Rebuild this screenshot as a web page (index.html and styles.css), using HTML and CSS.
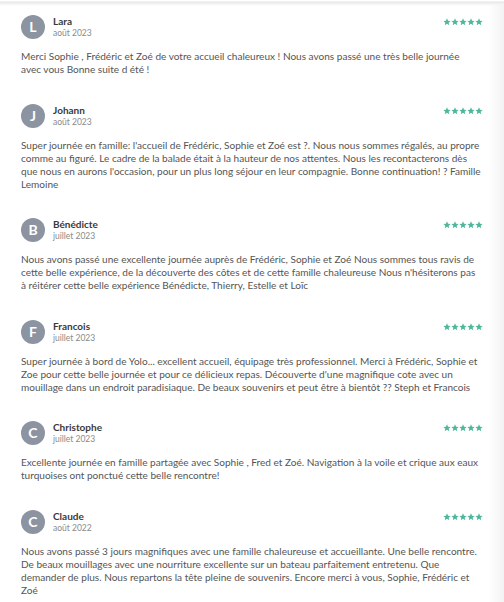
FILE: index.html
```html
<!DOCTYPE html>
<html lang="fr">
<head>
    <meta charset="UTF-8">
    <meta name="viewport" content="width=device-width, initial-scale=1.0">
    <title>Avis</title>
    <link rel="stylesheet" href="styles.css">
</head>
<body>

    <div class="top-shadow"></div>

    <div class="reviews">

        <div class="review">
            <div class="review-head">
                <div class="avatar">L</div>
                <div class="meta">
                    <div class="name">Lara</div>
                    <div class="date">août 2023</div>
                </div>
                <div class="stars">
                    <svg viewBox="0 0 10 10"><path d="M5 .4l1.3 3 3.2.3-2.4 2.1.7 3.2L5 7.3 2.2 9l.7-3.2L.5 3.7l3.2-.3z"/></svg>
                    <svg viewBox="0 0 10 10"><path d="M5 .4l1.3 3 3.2.3-2.4 2.1.7 3.2L5 7.3 2.2 9l.7-3.2L.5 3.7l3.2-.3z"/></svg>
                    <svg viewBox="0 0 10 10"><path d="M5 .4l1.3 3 3.2.3-2.4 2.1.7 3.2L5 7.3 2.2 9l.7-3.2L.5 3.7l3.2-.3z"/></svg>
                    <svg viewBox="0 0 10 10"><path d="M5 .4l1.3 3 3.2.3-2.4 2.1.7 3.2L5 7.3 2.2 9l.7-3.2L.5 3.7l3.2-.3z"/></svg>
                    <svg viewBox="0 0 10 10"><path d="M5 .4l1.3 3 3.2.3-2.4 2.1.7 3.2L5 7.3 2.2 9l.7-3.2L.5 3.7l3.2-.3z"/></svg>
                </div>
            </div>
            <p class="text">Merci Sophie , Frédéric et Zoé de votre accueil chaleureux ! Nous avons passé une très belle journée<br>avec vous Bonne suite d été !</p>
        </div>

        <div class="review">
            <div class="review-head">
                <div class="avatar">J</div>
                <div class="meta">
                    <div class="name">Johann</div>
                    <div class="date">août 2023</div>
                </div>
                <div class="stars">
                    <svg viewBox="0 0 10 10"><path d="M5 .4l1.3 3 3.2.3-2.4 2.1.7 3.2L5 7.3 2.2 9l.7-3.2L.5 3.7l3.2-.3z"/></svg>
                    <svg viewBox="0 0 10 10"><path d="M5 .4l1.3 3 3.2.3-2.4 2.1.7 3.2L5 7.3 2.2 9l.7-3.2L.5 3.7l3.2-.3z"/></svg>
                    <svg viewBox="0 0 10 10"><path d="M5 .4l1.3 3 3.2.3-2.4 2.1.7 3.2L5 7.3 2.2 9l.7-3.2L.5 3.7l3.2-.3z"/></svg>
                    <svg viewBox="0 0 10 10"><path d="M5 .4l1.3 3 3.2.3-2.4 2.1.7 3.2L5 7.3 2.2 9l.7-3.2L.5 3.7l3.2-.3z"/></svg>
                    <svg viewBox="0 0 10 10"><path d="M5 .4l1.3 3 3.2.3-2.4 2.1.7 3.2L5 7.3 2.2 9l.7-3.2L.5 3.7l3.2-.3z"/></svg>
                </div>
            </div>
            <p class="text">Super journée en famille: l'accueil de Frédéric, Sophie et Zoé est ?. Nous nous sommes régalés, au propre comme au figuré. Le cadre de la balade était à la hauteur de nos attentes. Nous les recontacterons dès que nous en aurons l'occasion, pour un plus long séjour en leur compagnie. Bonne continuation! ? Famille Lemoine</p>
        </div>

        <div class="review">
            <div class="review-head">
                <div class="avatar">B</div>
                <div class="meta">
                    <div class="name">Bénédicte</div>
                    <div class="date">juillet 2023</div>
                </div>
                <div class="stars">
                    <svg viewBox="0 0 10 10"><path d="M5 .4l1.3 3 3.2.3-2.4 2.1.7 3.2L5 7.3 2.2 9l.7-3.2L.5 3.7l3.2-.3z"/></svg>
                    <svg viewBox="0 0 10 10"><path d="M5 .4l1.3 3 3.2.3-2.4 2.1.7 3.2L5 7.3 2.2 9l.7-3.2L.5 3.7l3.2-.3z"/></svg>
                    <svg viewBox="0 0 10 10"><path d="M5 .4l1.3 3 3.2.3-2.4 2.1.7 3.2L5 7.3 2.2 9l.7-3.2L.5 3.7l3.2-.3z"/></svg>
                    <svg viewBox="0 0 10 10"><path d="M5 .4l1.3 3 3.2.3-2.4 2.1.7 3.2L5 7.3 2.2 9l.7-3.2L.5 3.7l3.2-.3z"/></svg>
                    <svg viewBox="0 0 10 10"><path d="M5 .4l1.3 3 3.2.3-2.4 2.1.7 3.2L5 7.3 2.2 9l.7-3.2L.5 3.7l3.2-.3z"/></svg>
                </div>
            </div>
            <p class="text">Nous avons passé une excellente journée auprès de Frédéric, Sophie et Zoé Nous sommes tous ravis de cette belle expérience, de la découverte des côtes et de cette famille chaleureuse Nous n'hésiterons pas à réitérer cette belle expérience Bénédicte, Thierry, Estelle et Loïc</p>
        </div>

        <div class="review">
            <div class="review-head">
                <div class="avatar">F</div>
                <div class="meta">
                    <div class="name">Francois</div>
                    <div class="date">juillet 2023</div>
                </div>
                <div class="stars">
                    <svg viewBox="0 0 10 10"><path d="M5 .4l1.3 3 3.2.3-2.4 2.1.7 3.2L5 7.3 2.2 9l.7-3.2L.5 3.7l3.2-.3z"/></svg>
                    <svg viewBox="0 0 10 10"><path d="M5 .4l1.3 3 3.2.3-2.4 2.1.7 3.2L5 7.3 2.2 9l.7-3.2L.5 3.7l3.2-.3z"/></svg>
                    <svg viewBox="0 0 10 10"><path d="M5 .4l1.3 3 3.2.3-2.4 2.1.7 3.2L5 7.3 2.2 9l.7-3.2L.5 3.7l3.2-.3z"/></svg>
                    <svg viewBox="0 0 10 10"><path d="M5 .4l1.3 3 3.2.3-2.4 2.1.7 3.2L5 7.3 2.2 9l.7-3.2L.5 3.7l3.2-.3z"/></svg>
                    <svg viewBox="0 0 10 10"><path d="M5 .4l1.3 3 3.2.3-2.4 2.1.7 3.2L5 7.3 2.2 9l.7-3.2L.5 3.7l3.2-.3z"/></svg>
                </div>
            </div>
            <p class="text">Super journée à bord de Yolo... excellent accueil, équipage très professionnel. Merci à Frédéric, Sophie et Zoe pour cette belle journée et pour ce délicieux repas. Découverte d'une magnifique cote avec un mouillage dans un endroit paradisiaque. De beaux souvenirs et peut être à bientôt ?? Steph et Francois</p>
        </div>

        <div class="review">
            <div class="review-head">
                <div class="avatar">C</div>
                <div class="meta">
                    <div class="name">Christophe</div>
                    <div class="date">juillet 2023</div>
                </div>
                <div class="stars">
                    <svg viewBox="0 0 10 10"><path d="M5 .4l1.3 3 3.2.3-2.4 2.1.7 3.2L5 7.3 2.2 9l.7-3.2L.5 3.7l3.2-.3z"/></svg>
                    <svg viewBox="0 0 10 10"><path d="M5 .4l1.3 3 3.2.3-2.4 2.1.7 3.2L5 7.3 2.2 9l.7-3.2L.5 3.7l3.2-.3z"/></svg>
                    <svg viewBox="0 0 10 10"><path d="M5 .4l1.3 3 3.2.3-2.4 2.1.7 3.2L5 7.3 2.2 9l.7-3.2L.5 3.7l3.2-.3z"/></svg>
                    <svg viewBox="0 0 10 10"><path d="M5 .4l1.3 3 3.2.3-2.4 2.1.7 3.2L5 7.3 2.2 9l.7-3.2L.5 3.7l3.2-.3z"/></svg>
                    <svg viewBox="0 0 10 10"><path d="M5 .4l1.3 3 3.2.3-2.4 2.1.7 3.2L5 7.3 2.2 9l.7-3.2L.5 3.7l3.2-.3z"/></svg>
                </div>
            </div>
            <p class="text">Excellente journée en famille partagée avec Sophie , Fred et Zoé. Navigation à la voile et crique aux eaux turquoises ont ponctué cette belle rencontre!</p>
        </div>

        <div class="review">
            <div class="review-head">
                <div class="avatar">C</div>
                <div class="meta">
                    <div class="name">Claude</div>
                    <div class="date">août 2022</div>
                </div>
                <div class="stars">
                    <svg viewBox="0 0 10 10"><path d="M5 .4l1.3 3 3.2.3-2.4 2.1.7 3.2L5 7.3 2.2 9l.7-3.2L.5 3.7l3.2-.3z"/></svg>
                    <svg viewBox="0 0 10 10"><path d="M5 .4l1.3 3 3.2.3-2.4 2.1.7 3.2L5 7.3 2.2 9l.7-3.2L.5 3.7l3.2-.3z"/></svg>
                    <svg viewBox="0 0 10 10"><path d="M5 .4l1.3 3 3.2.3-2.4 2.1.7 3.2L5 7.3 2.2 9l.7-3.2L.5 3.7l3.2-.3z"/></svg>
                    <svg viewBox="0 0 10 10"><path d="M5 .4l1.3 3 3.2.3-2.4 2.1.7 3.2L5 7.3 2.2 9l.7-3.2L.5 3.7l3.2-.3z"/></svg>
                    <svg viewBox="0 0 10 10"><path d="M5 .4l1.3 3 3.2.3-2.4 2.1.7 3.2L5 7.3 2.2 9l.7-3.2L.5 3.7l3.2-.3z"/></svg>
                </div>
            </div>
            <p class="text">Nous avons passé 3 jours magnifiques avec une famille chaleureuse et accueillante. Une belle rencontre. De beaux mouillages avec une nourriture excellente sur un bateau parfaitement entretenu. Que demander de plus. Nous repartons la tête pleine de souvenirs. Encore merci à vous, Sophie, Frédéric et Zoé</p>
        </div>

    </div>

</body>
</html>
```

FILE: styles.css
```css
body {
  margin: 0;
  overflow: hidden;
  font-family: Lato, "Noto Sans", sans-serif;
  background: linear-gradient(to right, #fff 488px, #f3f3f3 504px);
}

.top-shadow {
  height: 6px;
  background: linear-gradient(#fff 0, #fff 1px, #e6e6e6 2px, #f4f4f4 4px, rgba(255, 255, 255, 0) 6px);
}

.reviews {
  padding: 9px 21px 0 21px;
}

.review {
  margin-bottom: 27.5px;
}

.review-head {
  display: flex;
  align-items: center;
  width: 462px;
}

.avatar {
  width: 24px;
  height: 24px;
  border-radius: 50%;
  background-color: #8c94a1;
  color: #fff;
  font-weight: bold;
  font-size: 14px;
  line-height: 24px;
  text-align: center;
  flex-shrink: 0;
}

.meta {
  margin-left: 8px;
}

.name {
  font-size: 10px;
  font-weight: 700;
  color: #3a3a3a;
  line-height: 12px;
}

.date {
  font-size: 8.5px;
  color: #8a8a8a;
  line-height: 12px;
}

.stars {
  margin-left: auto;
  align-self: flex-start;
  margin-top: 3px;
  display: flex;
}

.stars svg {
  width: 8px;
  height: 8px;
  fill: #4fb79c;
}

.text {
  width: 461.45px;
  margin: 11px 0 0 0;
  font-size: 10.06px;
  line-height: 13px;
  color: #555;
}
```
